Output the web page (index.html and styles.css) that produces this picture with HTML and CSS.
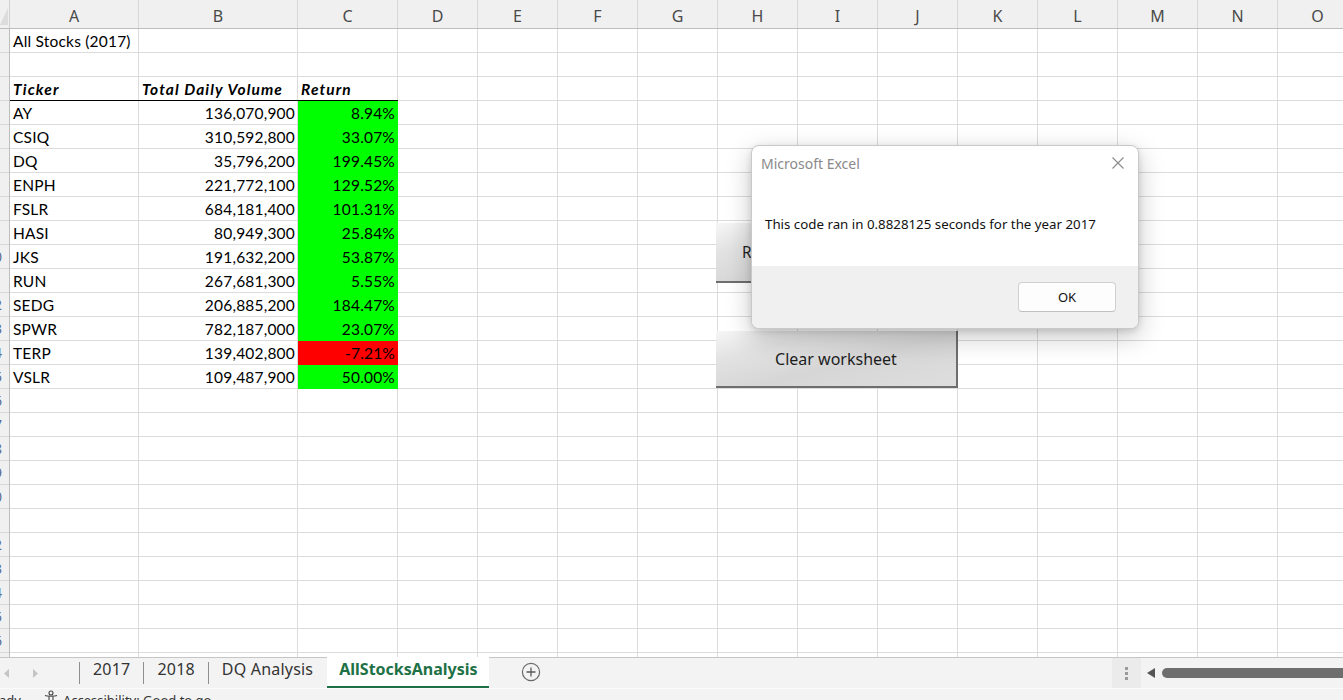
FILE: index.html
```html
<!DOCTYPE html>
<html lang="en">
<head>
<meta charset="utf-8">
<title>AllStocksAnalysis - Excel</title>
<link rel="stylesheet" href="styles.css">
</head>
<body>
<div class="app">
  <div class="sheet">
    <div class="colhead">
      <div class="corner"><div class="tri"></div></div>
      <div class="ch w-a">A</div>
      <div class="ch w-b">B</div>
      <div class="ch w-c">C</div>
      <div class="ch">D</div>
      <div class="ch">E</div>
      <div class="ch">F</div>
      <div class="ch">G</div>
      <div class="ch">H</div>
      <div class="ch">I</div>
      <div class="ch">J</div>
      <div class="ch">K</div>
      <div class="ch">L</div>
      <div class="ch">M</div>
      <div class="ch">N</div>
      <div class="ch">O</div>
    </div>
    <div class="body">
      <div class="rowhead">
        <div class="rh"><span>1</span></div>
        <div class="rh"><span>2</span></div>
        <div class="rh"><span>3</span></div>
        <div class="rh"><span>4</span></div>
        <div class="rh"><span>5</span></div>
        <div class="rh"><span>6</span></div>
        <div class="rh"><span>7</span></div>
        <div class="rh"><span>8</span></div>
        <div class="rh"><span>9</span></div>
        <div class="rh"><span>10</span></div>
        <div class="rh"><span>11</span></div>
        <div class="rh"><span>12</span></div>
        <div class="rh"><span>13</span></div>
        <div class="rh"><span>14</span></div>
        <div class="rh"><span>15</span></div>
        <div class="rh"><span>16</span></div>
        <div class="rh"><span>17</span></div>
        <div class="rh"><span>18</span></div>
        <div class="rh"><span>19</span></div>
        <div class="rh"><span>20</span></div>
        <div class="rh"><span>21</span></div>
        <div class="rh"><span>22</span></div>
        <div class="rh"><span>23</span></div>
        <div class="rh"><span>24</span></div>
        <div class="rh"><span>25</span></div>
        <div class="rh"><span>26</span></div>
        <div class="rh"><span>27</span></div>
      </div>
      <div class="cells">
        <div class="row"><div class="c">All Stocks (2017)</div><div class="c"></div><div class="c"></div></div>
        <div class="row"><div class="c"></div><div class="c"></div><div class="c"></div></div>
        <div class="row head"><div class="c hd">Ticker</div><div class="c hd">Total Daily Volume</div><div class="c hd">Return</div></div>
        <div class="row"><div class="c">AY</div><div class="c num">136,070,900</div><div class="c num up">8.94%</div></div>
        <div class="row"><div class="c">CSIQ</div><div class="c num">310,592,800</div><div class="c num up">33.07%</div></div>
        <div class="row"><div class="c">DQ</div><div class="c num">35,796,200</div><div class="c num up">199.45%</div></div>
        <div class="row"><div class="c">ENPH</div><div class="c num">221,772,100</div><div class="c num up">129.52%</div></div>
        <div class="row"><div class="c">FSLR</div><div class="c num">684,181,400</div><div class="c num up">101.31%</div></div>
        <div class="row"><div class="c">HASI</div><div class="c num">80,949,300</div><div class="c num up">25.84%</div></div>
        <div class="row"><div class="c">JKS</div><div class="c num">191,632,200</div><div class="c num up">53.87%</div></div>
        <div class="row"><div class="c">RUN</div><div class="c num">267,681,300</div><div class="c num up">5.55%</div></div>
        <div class="row"><div class="c">SEDG</div><div class="c num">206,885,200</div><div class="c num up">184.47%</div></div>
        <div class="row"><div class="c">SPWR</div><div class="c num">782,187,000</div><div class="c num up">23.07%</div></div>
        <div class="row"><div class="c">TERP</div><div class="c num">139,402,800</div><div class="c num down">-7.21%</div></div>
        <div class="row"><div class="c">VSLR</div><div class="c num">109,487,900</div><div class="c num up">50.00%</div></div>
      </div>
    </div>

    <div class="vbtn run">Run Analysis for All Stocks</div>
    <div class="vbtn clear">Clear worksheet</div>

    <div class="dialog">
      <div class="dlg-title">
        <span>Microsoft Excel</span>
        <svg class="x" width="12" height="12" viewBox="0 0 12 12"><path d="M0.5 0.5 L11.5 11.5 M11.5 0.5 L0.5 11.5" stroke="#8a8a8a" stroke-width="1.1" fill="none"/></svg>
      </div>
      <div class="dlg-msg">This code ran in 0.8828125 seconds for the year 2017</div>
      <div class="dlg-foot"><div class="ok">OK</div></div>
    </div>
  </div>

  <div class="tabbar">
    <div class="nav">
      <svg width="6" height="9" viewBox="0 0 6 9"><path d="M5 0 L0 4.5 L5 9 Z" fill="#c4c4c4"/></svg>
      <svg width="6" height="9" viewBox="0 0 6 9"><path d="M1 0 L6 4.5 L1 9 Z" fill="#c4c4c4"/></svg>
    </div>
    <div class="sep"></div>
    <div class="tab">2017</div>
    <div class="sep"></div>
    <div class="tab">2018</div>
    <div class="sep"></div>
    <div class="tab">DQ Analysis</div>
    <div class="tab active">AllStocksAnalysis</div>
    <div class="add">
      <svg width="20" height="20" viewBox="0 0 20 20"><circle cx="10" cy="10" r="8.6" fill="none" stroke="#6a6a6a" stroke-width="1.2"/><path d="M10 5.5 V14.5 M5.5 10 H14.5" stroke="#5a5a5a" stroke-width="1.3"/></svg>
    </div>
    <div class="hscroll">
      <div class="grip"><i></i><i></i><i></i></div>
      <svg class="larr" width="8" height="10" viewBox="0 0 8 10"><path d="M8 0 L0 5 L8 10 Z" fill="#555"/></svg>
      <div class="thumb"></div>
    </div>
  </div>
  <div class="status">
    <span class="ready">ady</span>
    <svg class="acc" width="16" height="16" viewBox="0 0 16 16"><circle cx="8" cy="3" r="2" fill="none" stroke="#444" stroke-width="1.1"/><path d="M2 5.5 C4 6.5 12 6.5 14 5.5 M6 6.8 V10 L4.5 15 M10 6.8 V10 L11.5 15" fill="none" stroke="#444" stroke-width="1.1"/></svg>
    <span>Accessibility: Good to go</span>
  </div>
</div>
</body>
</html>
```
FILE: styles.css
```css
* { box-sizing: border-box; margin: 0; padding: 0; }
html, body { width: 1343px; height: 700px; overflow: hidden; background: #fff; }
body { font-family: "Noto Sans", "Open Sans", sans-serif; color: #222; }

.app { display: flex; flex-direction: column; height: 700px; }

.sheet { position: relative; height: 657px; flex: none; overflow: hidden; display: flex; flex-direction: column; }

.colhead { display: flex; height: 29px; flex: none; background: #f0f0f0; border-bottom: 1px solid #bdbdbd; }
.corner { width: 10px; flex: none; border-right: 1px solid #d0d0d0; position: relative; }
.tri { position: absolute; left: 0; top: 8px; width: 8px; height: 17px; background: #dcdcdc; clip-path: polygon(100% 0, 100% 100%, 0 100%); }
.ch { width: 80px; flex: none; border-right: 1px solid #d8d8d8; text-align: center; font-size: 16px; line-height: 20px; padding-top: 6px; color: #4a4a4a; }
.ch.w-a { width: 129px; }
.ch.w-b { width: 159px; }
.ch.w-c { width: 100px; }

.body { display: flex; flex: 1; min-height: 0; }
.rowhead { width: 10px; flex: none; background: #f0f0f0; border-right: 1px solid #bdbdbd; overflow: hidden; }
.rh { height: 24px; border-bottom: 1px solid #d8d8d8; overflow: hidden; }
.rh span { display: block; width: 30px; margin-left: -21px; text-align: center; font-size: 14px; line-height: 23px; color: #5a6a8a; }

.cells {
  flex: 1;
  background-image:
    repeating-linear-gradient(to bottom, transparent 0 23px, #dcdcdc 23px 24px),
    linear-gradient(to right, transparent 0 128px, #dcdcdc 128px 129px, transparent 129px 287px, #dcdcdc 287px 288px, transparent 288px 387px, #dcdcdc 387px 388px, transparent 388px),
    repeating-linear-gradient(to right, transparent 0 79px, #dcdcdc 79px 80px);
  background-position: 0 0, 0 0, 388px 0;
  background-size: auto, auto, calc(100% - 388px) 100%;
  background-repeat: repeat, no-repeat, no-repeat;
}
.row { display: grid; grid-template-columns: 129px 159px 100px; height: 24px; }
.c { font-family: "Lato", "Liberation Sans", sans-serif; font-size: 15.5px; line-height: 22px; padding: 1px 3px 0 3px; white-space: nowrap; color: #000; letter-spacing: 0.2px; }
.c.num { text-align: right; }
.c.hd { font-weight: 700; font-style: italic; letter-spacing: 1.1px; }
.row.head .c { box-shadow: inset 0 -1px 0 #000; }
.c.up { background: #00ff00; }
.c.down { background: #ff0000; }

.vbtn { position: absolute; left: 716px; width: 242px; display: flex; align-items: center; justify-content: center;
  font-size: 16px; color: #1e1e1e;
  background: linear-gradient(165deg, #f6f6f6 0%, #e2e2e2 25%, #d6d6d6 55%, #dedede 100%);
  border-right: 2px solid #6e6e6e; border-bottom: 2px solid #6e6e6e; }
.vbtn.run { top: 223px; height: 60px; font-size: 15.4px; }
.vbtn.clear { top: 331px; height: 57px; }

.dialog { position: absolute; left: 751px; top: 145px; width: 388px; height: 184px; background: #fff;
  border: 1px solid #c9c9c9; border-radius: 8px; overflow: hidden; display: flex; flex-direction: column;
  box-shadow: 0 8px 26px rgba(0,0,0,0.22), 0 2px 6px rgba(0,0,0,0.12); }
.dlg-title { display: flex; justify-content: space-between; align-items: center; height: 34px; padding: 0 14px 0 9px; font-size: 14px; color: #8a8a8a; }
.dlg-msg { flex: 1; padding: 35px 0 0 13px; font-size: 13.3px; color: #111; }
.dlg-foot { height: 62px; flex: none; background: #f0f0f0; display: flex; justify-content: flex-end; padding: 16px 22px 0 0; }
.ok { width: 98px; height: 30px; background: #fdfdfd; border: 1px solid #d0d0d0; border-bottom-color: #c0c0c0; border-radius: 4px; display: flex; align-items: center; justify-content: center; font-size: 13px; color: #111; }

.tabbar { height: 31px; flex: none; display: flex; align-items: stretch; background: #f3f3f3; border-top: 1px solid #c6c6c6; }
.nav { width: 79px; flex: none; display: flex; align-items: center; gap: 22px; padding-left: 4px; }
.sep { width: 1px; height: 22px; align-self: center; background: #8e8e8e; flex: none; }
.tab { flex: none; padding: 0 13px 3px 13px; font-size: 16px; line-height: 23px; color: #333; letter-spacing: 0.2px; }
.tab.active { background: #fff; color: #1e7145; font-weight: 700; border-bottom: 2px solid #1e7145; padding: 0 11px 0 12px; margin-left: 1px; margin-top: -1px; line-height: 25px; letter-spacing: 0; }
.add { display: flex; align-items: center; padding-left: 32px; padding-bottom: 2px; }
.hscroll { margin-left: auto; width: 231px; display: flex; align-items: center; }
.grip { width: 29px; height: 100%; background: #ebebeb; display: flex; flex-direction: column; justify-content: center; align-items: center; gap: 2px; }
.grip i { width: 3px; height: 3px; background: #9a9a9a; display: block; }
.larr { margin-left: 6px; }
.thumb { margin-left: 7px; flex: 1; height: 10px; background: #6e6e6e; border-radius: 5px 0 0 5px; }

.status { height: 12px; flex: none; background: #f3f3f3; border-top: 1px solid #fbfbfb; display: flex; align-items: flex-start; font-size: 13px; color: #333; overflow: hidden; }
.status span { line-height: 14px; padding-top: 4px; display: block; }
.ready { margin-left: -1px; }
.acc { margin-left: 22px; margin-top: 1px; flex: none; }
.status span:last-child { margin-left: 4px; }
```
